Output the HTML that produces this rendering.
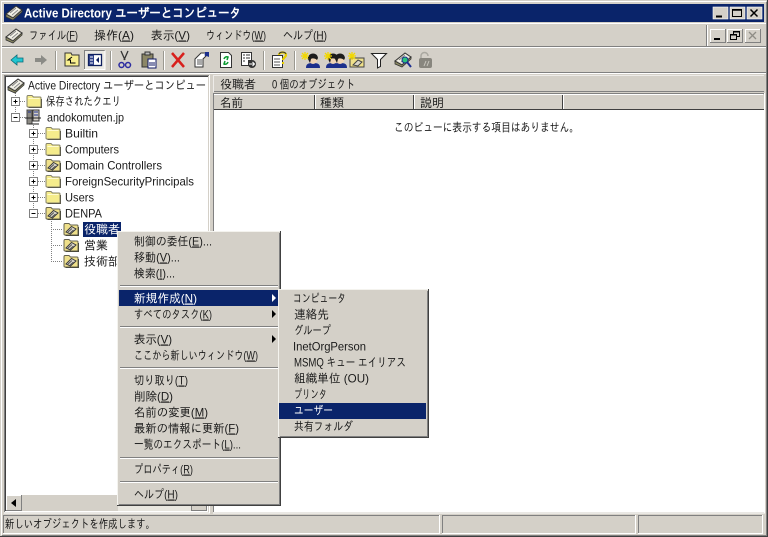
<!DOCTYPE html>
<html lang="ja"><head><meta charset="utf-8"><title>Active Directory ユーザーとコンピュータ</title>
<style>
html,body{margin:0;padding:0;background:#d4d0c8;overflow:hidden}
svg{display:block}
text{font-family:"Liberation Sans","IPAGothic","Noto Sans CJK JP",sans-serif;font-size:12px;fill:#1a1a1a}
.w{fill:#fff}
.b{font-weight:bold;font-size:13px;fill:#fff}
</style></head><body>
<svg width="768" height="537" viewBox="0 0 768 537" xmlns="http://www.w3.org/2000/svg">
<defs>
<g id="fold"><path d="M1 4q0-1.500 1-1.500h4l1.500 1.500h6.500q1 0 1 1v8q0 1-1 1h-12q-1 0-1-1z" fill="#f5ec8c" stroke="#86836a"/><path d="M2.500 5.500h11" stroke="#fffbd0"/><path d="M15.500 6v8.500h-13" fill="none" stroke="#5d5b4c"/></g>
<g id="ou"><path d="M1 4q0-1.500 1-1.500h4l1.500 1.500h6.500q1 0 1 1v8q0 1-1 1h-12q-1 0-1-1z" fill="#efe08a" stroke="#66634f"/><path d="M15.500 6v8.500h-13" fill="none" stroke="#4a4a3c"/><path d="M3 11l5.500-5.500 4.500 2.500-5.500 5z" fill="#dedad0" stroke="#3c3c3c"/><path d="M5 11l4-3.500M7 12l3.500-3" stroke="#555"/></g>
<g id="plus"><rect x="-4" y="-4" width="8" height="8" fill="#fff" stroke="#808080"/><path d="M-2 0h4M0-2v4" stroke="#000"/></g>
<g id="minus"><rect x="-4" y="-4" width="8" height="8" fill="#fff" stroke="#808080"/><path d="M-2 0h4" stroke="#000"/></g>
<g id="ad"><path d="M1 10l10-8 6 4-9 8z" fill="#d8d4c8" stroke="#333"/><path d="M3 10l8-7 4 3-7 6z" fill="#f6f4ea"/><path d="M1 10v3l7 3 9-8v-2l-9 8z" fill="#8c8a64" stroke="#333" stroke-width=".8"/><path d="M5 9l6-5M7 11l6-5" stroke="#888"/></g>
<g id="user"><path d="M2 16c0-4 2-5 7-5s7 1 7 5z" fill="#1c2f8c"/><ellipse cx="9" cy="7" rx="4.500" ry="5" fill="#f0d4b4"/><path d="M4 7c-1-6 9-8 10-1l-1 2c-2-2-5-2-6-1l-1 4z" fill="#1c1c1c"/></g>
<g id="star"><path d="M-4 0h8M0-4v8M-3-3l6 6M-3 3l6-6" stroke="#f2d800" stroke-width="1.300"/></g>
</defs>

<!-- window frame -->
<rect width="768" height="537" fill="#d4d0c8"/>
<path d="M1.500 535V1.500H766" fill="none" stroke="#fff"/>
<path d="M767.500 0V536.500H0" fill="none" stroke="#404040"/>
<path d="M766.500 2V535.500H2" fill="none" stroke="#808080"/>

<!-- title bar -->
<rect x="4" y="4" width="760" height="18" fill="#0a246a"/>
<use href="#ad" x="5" y="4"/>
<text class="b" x="24" y="17.500" textLength="217" lengthAdjust="spacingAndGlyphs">Active Directory ユーザーとコンピュータ</text>
<g>
<rect x="713" y="7" width="15" height="12" fill="#d4d0c8" stroke="#fff" stroke-width=".6"/><path d="M716 16.500h6" stroke="#000" stroke-width="2"/>
<rect x="730" y="7" width="15" height="12" fill="#d4d0c8" stroke="#fff" stroke-width=".6"/><rect x="732.500" y="9.500" width="9" height="7" fill="none" stroke="#000"/><path d="M732 10h10" stroke="#000" stroke-width="1.500"/>
<rect x="747" y="7" width="15" height="12" fill="#d4d0c8" stroke="#fff" stroke-width=".6"/><path d="M750.500 9.500l7 7M757.500 9.500l-7 7" stroke="#000" stroke-width="1.500"/>
</g>

<!-- menu bar -->
<path d="M2 23.500H766" stroke="#fff"/>
<use href="#ad" x="5" y="27"/>
<text x="29" y="39.500" textLength="49" lengthAdjust="spacingAndGlyphs">ファイル(<tspan text-decoration="underline">F</tspan>)</text>
<text x="94" y="39.500" textLength="40" lengthAdjust="spacingAndGlyphs">操作(<tspan text-decoration="underline">A</tspan>)</text>
<text x="151" y="39.500" textLength="39" lengthAdjust="spacingAndGlyphs">表示(<tspan text-decoration="underline">V</tspan>)</text>
<text x="206" y="39.500" textLength="60" lengthAdjust="spacingAndGlyphs">ウィンドウ(<tspan text-decoration="underline">W</tspan>)</text>
<text x="283" y="39.500" textLength="44" lengthAdjust="spacingAndGlyphs">ヘルプ(<tspan text-decoration="underline">H</tspan>)</text>
<path d="M707.500 25V46" stroke="#fff"/><path d="M706.500 25V46" stroke="#808080"/>
<g>
<rect x="710.500" y="29.500" width="15" height="13" fill="#d4d0c8" stroke="#808080"/><path d="M710.500 42V29.500H725" fill="none" stroke="#fff"/><path d="M714 39h6" stroke="#000" stroke-width="2"/>
<rect x="727.500" y="29.500" width="15" height="13" fill="#d4d0c8" stroke="#808080"/><path d="M727.500 42V29.500H742" fill="none" stroke="#fff"/><rect x="733.500" y="31.500" width="6" height="5" fill="none" stroke="#000"/><rect x="730.500" y="34.500" width="6" height="5" fill="#d4d0c8" stroke="#000"/><path d="M730 35h7M733 32h7" stroke="#000"/>
<rect x="745.500" y="29.500" width="15" height="13" fill="#d4d0c8" stroke="#808080"/><path d="M745.500 42V29.500H760" fill="none" stroke="#fff"/><path d="M749 32l7 7M756 32l-7 7" stroke="#8f8d86" stroke-width="1.300"/>
</g>
<path d="M2 46.500H766" stroke="#808080"/><path d="M2 47.500H766" stroke="#fff"/>

<!-- toolbar -->
<path d="M11 60l6-5v3h6v4h-6v3z" fill="#21c6d0" stroke="#0a6a78" stroke-width=".8"/>
<path d="M47 60l-6-5v3h-6v4h6v3z" fill="#8b8b86"/>
<path d="M55.500 51V70M110.500 51V70M163.500 51V70M263.500 51V70M294.500 51V70" stroke="#9a9890"/>
<path d="M56.500 51V70M111.500 51V70M164.500 51V70M264.500 51V70M295.500 51V70" stroke="#fff"/>
<path d="M65 53h6l1 2h7v11h-14z" fill="#f7ee8e" stroke="#333"/><path d="M72 57l-4 3h2.500v3h5" fill="none" stroke="#000"/>
<rect x="84" y="50" width="21" height="20" fill="#eceae4"/><path d="M84.500 70V50.500H105" fill="none" stroke="#808080"/><path d="M105 50.500V69.500H84" fill="none" stroke="#fff"/>
<rect x="88.500" y="54.500" width="13" height="11" fill="#fff" stroke="#10205f" stroke-width="1.300"/><rect x="89" y="55" width="5" height="10" fill="#2c3f88"/><path d="M99 57l-3 3 3 3z" fill="#10205f"/><path d="M90 57h3M90 60h3M90 63h3" stroke="#fff"/>
<path d="M121 51l4 9M128 51l-4 9" stroke="#333" stroke-width="1.300"/><circle cx="121.500" cy="65" r="2.500" fill="none" stroke="#2c2ca0" stroke-width="1.500"/><circle cx="128" cy="65" r="2.500" fill="none" stroke="#2c2ca0" stroke-width="1.500"/>
<path d="M142 54h11v13h-11z" fill="#8c8766" stroke="#333"/><path d="M145 52h5v3h-5z" fill="#bbb" stroke="#333"/><path d="M148 59h8v9h-8z" fill="#fff" stroke="#111a66"/><path d="M149 63h6M149 65h6" stroke="#111a66"/>
<path d="M172 53l12 14M184 53l-12 14" stroke="#d8201c" stroke-width="2.500"/>
<path d="M195 59l6-6h5v3l-3 3v8h-8z" fill="#fff" stroke="#333"/><path d="M197 60h5M197 62h5M197 64h5" stroke="#555"/><path d="M204 55l5-3v5z" fill="#1c2f8c"/><rect x="205" y="52" width="4" height="4" fill="#1c2f8c"/>
<path d="M220.500 52.500h8l3 3v12h-11z" fill="#fff" stroke="#333"/><path d="M224 59a3 3 0 0 1 4-2l-1 3M228 62a3 3 0 0 1-4 2l1-3" fill="none" stroke="#0b9a30" stroke-width="1.500"/>
<path d="M241.500 52.500h10v8h-3v5h-7z" fill="#fff" stroke="#333"/><path d="M243 55h2M246 55h4M243 58h2M246 58h4M243 61h2" stroke="#333"/><circle cx="252" cy="64" r="4" fill="#333"/><path d="M249 64h5M252.500 62l2 2-2 2" stroke="#fff" fill="none"/>
<path d="M272.500 55.500h10v12h-10z" fill="#fff" stroke="#333"/><path d="M274 59h6M274 62h6M274 65h6" stroke="#555"/><path d="M279 55c0-3.500 7-3.500 7 0 0 2.500-3 2.500-3 5M283 62v2" fill="none" stroke="#e8cf00" stroke-width="2.200"/><path d="M279 54c1-2.500 6-2.500 7 0" fill="none" stroke="#333"/>
<use href="#user" x="304" y="52"/><use href="#star" x="305" y="56"/>
<use href="#user" x="324" y="52"/><use href="#user" x="331" y="52"/><use href="#star" x="328" y="56"/>
<path d="M350 58h14v9h-14z" fill="#efe08a" stroke="#444"/><path d="M353 65l5-5 4 2-4 4z" fill="#d9d5c8" stroke="#444"/><use href="#star" x="352" y="56"/>
<path d="M371.500 53.500h15l-6 6v7l-3 1.500v-8.500z" fill="#fff" stroke="#222"/>
<use href="#ad" x="394" y="51"/><circle cx="405" cy="60" r="3" fill="#2bc47c" stroke="#1d2f90"/><path d="M407 62l4 5" stroke="#1d2f90" stroke-width="2"/>
<path d="M421 59v-3a3.500 3.500 0 0 1 7 0" fill="none" stroke="#aaa8a0" stroke-width="1.500"/><rect x="419" y="58" width="13" height="10" rx="2" fill="#88867e"/><path d="M424 66l2-5M427 66l2-5" stroke="#c8c6be"/>
<path d="M2 72.500H766" stroke="#808080"/><path d="M2 73.500H766" stroke="#fff"/>

<!-- tree pane -->
<rect x="5" y="76" width="203" height="436" fill="#fff"/>
<path d="M4.500 512V75.500H209" fill="none" stroke="#808080"/>
<path d="M5.500 511V76.500H208" fill="none" stroke="#404040"/>
<path d="M209.500 75V513H4" fill="none" stroke="#fff"/>
<use href="#ad" x="7" y="77"/>
<text x="28" y="89.500" textLength="178" lengthAdjust="spacingAndGlyphs">Active Directory ユーザーとコンピュー</text>
<!-- tree lines -->
<path d="M15.500 93V117M33.500 125V213M51.500 221V261M20 101.500h6M20 117.500h6M38 133.500h7M38 149.500h7M38 165.500h7M38 181.500h7M38 197.500h7M38 213.500h7M51 229.500h12M51 245.500h12M51 261.500h12" stroke="#808080" stroke-dasharray="1 1" fill="none"/>
<use href="#plus" x="15.500" y="101.500"/><use href="#minus" x="15.500" y="117.500"/>
<use href="#fold" x="26" y="93"/>
<text x="46" y="105.500" textLength="75" lengthAdjust="spacingAndGlyphs">保存されたクエリ</text>
<g><rect x="27" y="110" width="5" height="14" fill="#8c8a84" stroke="#444"/><rect x="33" y="110" width="6" height="11" fill="#d4d0c8" stroke="#333"/><path d="M28 112h3M34 112h4M34 115h4" stroke="#1c2f8c"/><path d="M25 118h16M29 124h10" stroke="#222"/></g>
<text x="47" y="121.500" textLength="77" lengthAdjust="spacingAndGlyphs">andokomuten.jp</text>
<use href="#plus" x="33.500" y="133.500"/><use href="#fold" x="45" y="125"/><text x="65" y="137.500" textLength="33" lengthAdjust="spacingAndGlyphs">Builtin</text>
<use href="#plus" x="33.500" y="149.500"/><use href="#fold" x="45" y="141"/><text x="65" y="153.500" textLength="54" lengthAdjust="spacingAndGlyphs">Computers</text>
<use href="#plus" x="33.500" y="165.500"/><use href="#ou" x="45" y="157"/><text x="65" y="169.500" textLength="97" lengthAdjust="spacingAndGlyphs">Domain Controllers</text>
<use href="#plus" x="33.500" y="181.500"/><use href="#fold" x="45" y="173"/><text x="65" y="185.500" textLength="129" lengthAdjust="spacingAndGlyphs">ForeignSecurityPrincipals</text>
<use href="#plus" x="33.500" y="197.500"/><use href="#fold" x="45" y="189"/><text x="65" y="201.500" textLength="29" lengthAdjust="spacingAndGlyphs">Users</text>
<use href="#minus" x="33.500" y="213.500"/><use href="#ou" x="45" y="205"/><text x="65" y="217.500" textLength="37" lengthAdjust="spacingAndGlyphs">DENPA</text>
<use href="#ou" x="63" y="221"/><rect x="83" y="222" width="38" height="15" fill="#0a246a"/><text class="w" x="84" y="233.500" textLength="36" lengthAdjust="spacingAndGlyphs">役職者</text>
<use href="#ou" x="63" y="237"/><text x="84" y="249.500" textLength="24" lengthAdjust="spacingAndGlyphs">営業</text>
<use href="#ou" x="63" y="253"/><text x="84" y="265.500" textLength="36" lengthAdjust="spacingAndGlyphs">技術部</text>
<!-- tree scrollbar -->
<rect x="6" y="495" width="201" height="16" fill="#e8e6df"/>
<rect x="6.500" y="495.500" width="15" height="15" fill="#d4d0c8" stroke="#808080"/><path d="M6.500 510V495.500H21" fill="none" stroke="#fff"/><path d="M16 499l-5 4 5 4z" fill="#000"/>
<rect x="22" y="495" width="96" height="16" fill="#d4d0c8"/>
<rect x="191.500" y="495.500" width="15" height="15" fill="#d4d0c8" stroke="#808080"/>

<!-- right pane -->
<path d="M214 91.500H764" stroke="#808080"/>
<text x="220" y="88.500" textLength="36" lengthAdjust="spacingAndGlyphs">役職者</text>
<text x="272" y="88.500" textLength="83" lengthAdjust="spacingAndGlyphs">0 個のオブジェクト</text>
<path d="M213.500 92.500V75.500H764" fill="none" stroke="#fff" stroke-opacity=".6"/>
<rect x="214" y="94" width="550" height="418" fill="#fff"/>
<path d="M213.500 512V93.500H765" fill="none" stroke="#808080"/>
<path d="M764.500 93V513H213" fill="none" stroke="#fff"/>
<rect x="214" y="94" width="349" height="16" fill="#d4d0c8"/>
<rect x="563" y="94" width="201" height="16" fill="#d4d0c8"/>
<path d="M214 94.500H763" stroke="#fff"/>
<path d="M214 109.500H764" stroke="#404040"/>
<path d="M314.500 95V109M413.500 95V109M562.500 95V109" stroke="#404040"/>
<path d="M315.500 95V109M414.500 95V109M563.500 95V109" stroke="#fff"/>
<text x="220" y="107" textLength="23" lengthAdjust="spacingAndGlyphs">名前</text>
<text x="320" y="107" textLength="24" lengthAdjust="spacingAndGlyphs">種類</text>
<text x="420" y="107" textLength="24" lengthAdjust="spacingAndGlyphs">説明</text>
<text x="394" y="131.500" textLength="185" lengthAdjust="spacingAndGlyphs">このビューに表示する項目はありません。</text>

<!-- status bar -->
<path d="M3.500 533V515.500H439" fill="none" stroke="#808080"/><path d="M439.500 515V533.500H3" fill="none" stroke="#fff"/>
<path d="M442.500 533V515.500H635" fill="none" stroke="#808080"/><path d="M635.500 515V533.500H442" fill="none" stroke="#fff"/>
<path d="M638.500 533V515.500H762" fill="none" stroke="#808080"/><path d="M762.500 515V533.500H638" fill="none" stroke="#fff"/>
<text x="5" y="528" textLength="150" lengthAdjust="spacingAndGlyphs">新しいオブジェクトを作成します。</text>

<!-- context menu 1 -->
<rect x="117" y="231" width="164" height="275" fill="#d4d0c8"/>
<path d="M117.500 505V231.500H280" fill="none" stroke="#f4f3ee"/>
<path d="M280.500 231V505.500H117" fill="none" stroke="#404040"/>
<path d="M279.500 233V504.500H119" fill="none" stroke="#808080"/>
<text x="134" y="245.500" textLength="78" lengthAdjust="spacingAndGlyphs">制御の委任(<tspan text-decoration="underline">E</tspan>)...</text>
<text x="134" y="261.500" textLength="46" lengthAdjust="spacingAndGlyphs">移動(<tspan text-decoration="underline">V</tspan>)...</text>
<text x="134" y="277.500" textLength="41" lengthAdjust="spacingAndGlyphs">検索(<tspan text-decoration="underline">I</tspan>)...</text>
<path d="M120 285.500H278" stroke="#808080"/><path d="M120 286.500H278" stroke="#fff"/>
<rect x="119" y="290" width="159" height="16" fill="#0a246a"/>
<text class="w" x="134" y="302.500" textLength="63" lengthAdjust="spacingAndGlyphs">新規作成(<tspan text-decoration="underline">N</tspan>)</text>
<path d="M272 294l4 4-4 4z" fill="#fff"/>
<text x="134" y="318.500" textLength="78" lengthAdjust="spacingAndGlyphs">すべてのタスク(<tspan text-decoration="underline">K</tspan>)</text>
<path d="M272 310l4 4-4 4z" fill="#000"/>
<path d="M120 326.500H278" stroke="#808080"/><path d="M120 327.500H278" stroke="#fff"/>
<text x="134" y="343.500" textLength="38" lengthAdjust="spacingAndGlyphs">表示(<tspan text-decoration="underline">V</tspan>)</text>
<path d="M272 335l4 4-4 4z" fill="#000"/>
<text x="134" y="359.500" textLength="124" lengthAdjust="spacingAndGlyphs">ここから新しいウィンドウ(<tspan text-decoration="underline">W</tspan>)</text>
<path d="M120 367.500H278" stroke="#808080"/><path d="M120 368.500H278" stroke="#fff"/>
<text x="134" y="384.500" textLength="54" lengthAdjust="spacingAndGlyphs">切り取り(<tspan text-decoration="underline">T</tspan>)</text>
<text x="134" y="400.500" textLength="39" lengthAdjust="spacingAndGlyphs">削除(<tspan text-decoration="underline">D</tspan>)</text>
<text x="134" y="416.500" textLength="74" lengthAdjust="spacingAndGlyphs">名前の変更(<tspan text-decoration="underline">M</tspan>)</text>
<text x="134" y="432.500" textLength="105" lengthAdjust="spacingAndGlyphs">最新の情報に更新(<tspan text-decoration="underline">F</tspan>)</text>
<text x="134" y="448.500" textLength="107" lengthAdjust="spacingAndGlyphs">一覧のエクスポート(<tspan text-decoration="underline">L</tspan>)...</text>
<path d="M120 457.500H278" stroke="#808080"/><path d="M120 458.500H278" stroke="#fff"/>
<text x="134" y="473.500" textLength="59" lengthAdjust="spacingAndGlyphs">プロパティ(<tspan text-decoration="underline">R</tspan>)</text>
<path d="M120 481.500H278" stroke="#808080"/><path d="M120 482.500H278" stroke="#fff"/>
<text x="134" y="498.500" textLength="44" lengthAdjust="spacingAndGlyphs">ヘルプ(<tspan text-decoration="underline">H</tspan>)</text>

<!-- context menu 2 -->
<rect x="278" y="289" width="151" height="149" fill="#d4d0c8"/>
<path d="M278.500 437V289.500H428" fill="none" stroke="#f4f3ee"/>
<path d="M428.500 289V437.500H278" fill="none" stroke="#404040"/>
<path d="M427.500 291V436.500H280" fill="none" stroke="#808080"/>
<text x="293" y="302.500" textLength="53" lengthAdjust="spacingAndGlyphs">コンピュータ</text>
<text x="294" y="318.500" textLength="35" lengthAdjust="spacingAndGlyphs">連絡先</text>
<text x="294" y="334.500" textLength="37" lengthAdjust="spacingAndGlyphs">グループ</text>
<text x="293" y="350.500" textLength="73" lengthAdjust="spacingAndGlyphs">InetOrgPerson</text>
<text x="294" y="366.500" textLength="112" lengthAdjust="spacingAndGlyphs">MSMQ キュー エイリアス</text>
<text x="294" y="382.500" textLength="75" lengthAdjust="spacingAndGlyphs">組織単位 (OU)</text>
<text x="294" y="398.500" textLength="33" lengthAdjust="spacingAndGlyphs">プリンタ</text>
<rect x="279" y="403" width="147" height="16" fill="#0a246a"/>
<text class="w" x="294" y="414.500" textLength="39" lengthAdjust="spacingAndGlyphs">ユーザー</text>
<text x="294" y="430.500" textLength="59" lengthAdjust="spacingAndGlyphs">共有フォルダ</text>
</svg>
</body></html>
